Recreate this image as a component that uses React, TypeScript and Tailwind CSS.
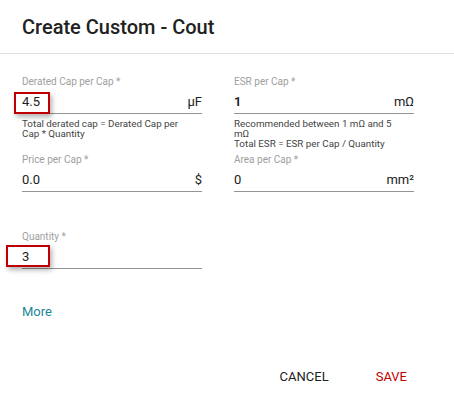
const Field = ({ label, value, unit, bold, helper }: { label: string; value: string; unit?: React.ReactNode; bold?: boolean; helper?: React.ReactNode }) => {
    return (
        <div className="flex flex-col">
            <label className="text-[10px] leading-[12px] text-[#9e9e9e]">{label}</label>
            <div className="mt-[5px] flex items-center justify-between border-b border-[#949494] pb-[2px]">
                <span className={`text-[13px] leading-[18px] text-[#212121] ${bold ? 'font-semibold' : ''}`}>{value}</span>
                {unit && <span className="text-[13px] leading-[18px] text-[#212121]">{unit}</span>}
            </div>
            {helper && (
                <div className="mt-[5px] text-[9.8px] leading-[10px] text-[#444]">{helper}</div>
            )}
        </div>
    )
}

// marcador rojo con sombra, sobre la captura
const Marker = ({ className }: { className: string }) => (
    <div className={`absolute border-2 border-[#c00000] shadow-[2px_3px_5px_rgba(0,0,0,0.3)] ${className}`} />
)

export default function App() {
    return (
        <div className="relative w-[454px] h-[399px] bg-white font-['Roboto',sans-serif] overflow-hidden">
            <div className="h-[54px] border-b border-[#e0e0e0] pl-[22px] pt-[15px]">
                <h2 className="text-[20px] leading-[24px] font-medium text-[#212121]">Create Custom - Cout</h2>
            </div>

            <div className="px-[22px] pt-[22px]">
                <div className="grid grid-cols-[180px_180px] gap-x-[32px] gap-y-[5px]">
                    <Field
                        label="Derated Cap per Cap *"
                        value="4.5"
                        unit="µF"
                        helper={<>Total derated cap = Derated Cap per<br />Cap * Quantity</>}
                    />
                    <Field
                        label="ESR per Cap *"
                        value="1"
                        unit="mΩ"
                        bold
                        helper={<>Recommended between 1 mΩ and 5<br />mΩ<br />Total ESR = ESR per Cap / Quantity</>}
                    />
                    <Field label="Price per Cap *" value="0.0" unit="$" />
                    <Field label="Area per Cap *" value="0" unit="mm²" />
                </div>

                <div className="mt-[39px] w-[180px]">
                    <Field label="Quantity *" value="3" />
                </div>

                <div className="mt-[30px]">
                    <a className="text-[13px] leading-[18px] text-[#1a8797] cursor-pointer">More</a>
                </div>
            </div>

            <div className="mt-[45px] flex justify-end gap-[47px] pr-[47px]">
                <button className="text-[13px] leading-[18px] text-[#212121] uppercase">Cancel</button>
                <button className="text-[13px] leading-[18px] text-[#c00000] uppercase">Save</button>
            </div>

            <Marker className="left-[14px] top-[92px] w-[36px] h-[22px]" />
            <Marker className="left-[6px] top-[245px] w-[44px] h-[22px]" />
        </div>
    )
}
